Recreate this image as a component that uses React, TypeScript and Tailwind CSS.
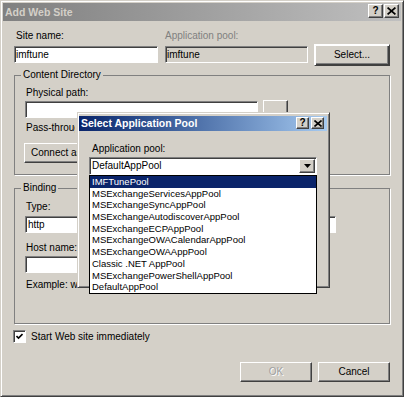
const raised =
  "bg-[#d4d0c8] border border-t-white border-l-white border-r-[#404040] border-b-[#404040] shadow-[inset_-1px_-1px_0_#808080]";
const sunken =
  "border border-t-[#808080] border-l-[#808080] border-r-white border-b-white shadow-[inset_1px_1px_0_#404040]";

const pools = [
  "IMFTunePool",
  "MSExchangeServicesAppPool",
  "MSExchangeSyncAppPool",
  "MSExchangeAutodiscoverAppPool",
  "MSExchangeECPAppPool",
  "MSExchangeOWACalendarAppPool",
  "MSExchangeOWAAppPool",
  "Classic .NET AppPool",
  "MSExchangePowerShellAppPool",
  "DefaultAppPool",
];

function CloseGlyph({ size = 8 }: { size?: number }) {
  return (
    <svg width={size} height={size - 1} viewBox="0 0 8 7">
      <path d="M0.5 0.5 L7.5 6.5 M7.5 0.5 L0.5 6.5" stroke="#000" strokeWidth="1.6" />
    </svg>
  );
}

function CaptionButtons({ small }: { small?: boolean }) {
  const size = small ? "w-[13px] h-[12px]" : "w-[15px] h-[14px]";
  return (
    <div className={small ? "flex gap-[2px]" : "flex gap-[1px]"}>
      <div className={`${raised} ${size} flex items-center justify-center`}>
        <span className="font-bold text-[10px] leading-[10px]">?</span>
      </div>
      <div className={`${raised} ${size} flex items-center justify-center`}>
        <CloseGlyph size={small ? 8 : 9} />
      </div>
    </div>
  );
}

function SelectPoolDialog() {
  return (
    <div className="absolute left-[76px] top-[111px] z-10 w-[253px] h-[176px] bg-[#d4d0c8] border border-t-[#d4d0c8] border-l-[#d4d0c8] border-r-[#404040] border-b-[#404040] shadow-[inset_1px_1px_0_#fff,inset_-1px_-1px_0_#808080] pt-[3px] pl-[1px] pr-[2px]">
      <div className="h-[15px] flex items-start justify-between bg-gradient-to-r from-[#0a246a] to-[#a6caf0] pl-[2px] pr-[3px] pt-[1px]">
        <span className="text-white font-bold text-[10.5px] leading-[13px]">
          Select Application Pool
        </span>
        <CaptionButtons small />
      </div>
      <div className="pl-[10px] mt-[12px]">
        <div className="pl-[3px]">Application pool:</div>
        <div className="relative w-[228px] mt-[2px]">
          <div className={`${sunken} bg-white h-[18px] flex items-center justify-between pl-[2px] pr-[1px]`}>
            <span>DefaultAppPool</span>
            <div className={`${raised} w-[16px] h-[14px] flex items-center justify-center`}>
              <svg width="7" height="4" viewBox="0 0 7 4">
                <path d="M0 0 H7 L3.5 4 Z" fill="#000" />
              </svg>
            </div>
          </div>
          <ul className="absolute top-full left-0 right-0 bg-white border border-black text-[9.5px]">
            {pools.map((p, i) => (
              <li
                key={p}
                className={`h-[11.7px] leading-[11.7px] pl-[2px] whitespace-nowrap ${
                  i === 0 ? "bg-[#0a246a] text-white" : ""
                }`}
              >
                {p}
              </li>
            ))}
          </ul>
        </div>
      </div>
    </div>
  );
}

export default function App() {
  return (
    <div className="relative w-[404px] h-[397px] bg-[#d4d0c8] border border-t-[#d4d0c8] border-l-[#d4d0c8] border-r-[#404040] border-b-[#404040] shadow-[inset_1px_1px_0_#fff,inset_-1px_-1px_0_#808080] p-[2px] font-['Liberation_Sans',Arial,sans-serif] text-[10px] leading-[12px] text-black">
      <div className="h-[18px] flex items-start justify-between bg-gradient-to-r from-[#808080] to-[#c0c0c0] pl-[2px] pr-[2px] pt-[1px]">
        <span className="text-[#d4d0c8] font-bold text-[10.5px] leading-[16px]">
          Add Web Site
        </span>
        <CaptionButtons />
      </div>

      <div className="px-[11px] pt-[9px]">
        <div className="flex items-start gap-[7px]">
          <div className="w-[144px]">
            <div className="pl-[2px]">Site name:</div>
            <div className={`${sunken} bg-white h-[17px] mt-[4px] pl-[1px] flex items-center`}>
              imftune
            </div>
          </div>
          <div className="w-[143px]">
            <div className="text-[#808080]">Application pool:</div>
            <div className={`${sunken} bg-[#d4d0c8] h-[17px] mt-[4px] pl-[1px] flex items-center`}>
              imftune
            </div>
          </div>
          <button className={`${raised} ml-[-1px] mt-[14px] w-[76px] h-[22px] border-black shadow-[inset_1px_1px_0_#fff,inset_-1px_-1px_0_#404040,inset_-2px_-2px_0_#808080]`}>
            Select...
          </button>
        </div>

        <fieldset className="mt-[3px] border border-[#808080] shadow-[1px_1px_0_#fff] px-[10px] pb-[11px]">
          <legend className="ml-[-4px] px-[2px]">Content Directory</legend>
          <div className="mt-[6px] pl-[1px]">Physical path:</div>
          <div className="flex items-end gap-[5px] mt-[1px]">
            <div className={`${sunken} bg-white h-[17px] w-[233px]`} />
            <button className={`${raised} w-[25px] h-[18px]`} />
          </div>
          <div className="mt-[4px] pl-[1px] w-[50px] overflow-hidden whitespace-nowrap">
            Pass-through authentication
          </div>
          <div className="flex mt-[9px]">
            <button className={`${raised} ml-[-1px] w-[74px] h-[20px] text-left pl-[6px] overflow-hidden whitespace-nowrap`}>
              Connect as...
            </button>
          </div>
        </fieldset>

        <fieldset className="mt-[7px] border border-[#808080] shadow-[1px_1px_0_#fff] px-[10px] pb-[32px]">
          <legend className="ml-[-4px] px-[2px]">Binding</legend>
          <div className="flex gap-[10px] mt-[7px]">
            <div className="w-[105px]">
              <div className="pl-[1px]">Type:</div>
              <div className={`${sunken} bg-white h-[17px] mt-[3px] pl-[2px] flex items-center`}>http</div>
            </div>
            <div className="w-[196px] pt-[15px]">
              <div className={`${sunken} bg-white h-[17px]`} />
            </div>
          </div>
          <div className="mt-[9px] pl-[1px]">Host name:</div>
          <div className={`${sunken} bg-white h-[17px] w-[200px] mt-[2px]`} />
          <div className="mt-[6px] pl-[1px] w-[63px] overflow-hidden whitespace-nowrap">
            Example: www.contoso.com
          </div>
        </fieldset>

        <label className="flex items-center gap-[5px] mt-[6px] ml-[-1px]">
          <span className={`${sunken} bg-white w-[13px] h-[13px] flex items-center justify-center`}>
            <svg width="7" height="7" viewBox="0 0 7 7">
              <path d="M0.5 3 L2.5 5 L6.5 1" stroke="#000" strokeWidth="1.6" fill="none" />
            </svg>
          </span>
          <span>Start Web site immediately</span>
        </label>

        <div className="flex justify-end gap-[6px] mt-[19px]">
          <button className={`${raised} w-[72px] h-[20px] text-[#a0a0a0] [text-shadow:1px_1px_0_#fff]`}>
            OK
          </button>
          <button className={`${raised} w-[72px] h-[20px]`}>Cancel</button>
        </div>
      </div>

      <SelectPoolDialog />
    </div>
  );
}
